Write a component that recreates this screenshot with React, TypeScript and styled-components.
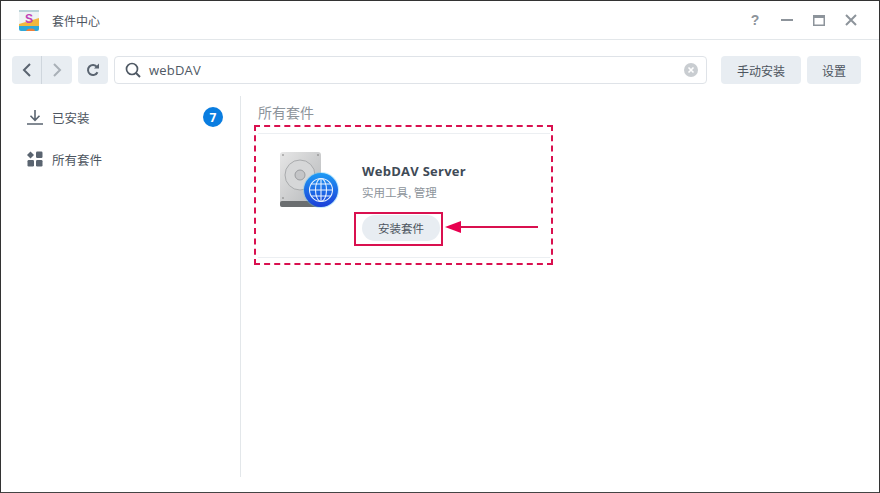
import React from 'react'
import styled, { createGlobalStyle } from 'styled-components'

const GlobalStyle = createGlobalStyle`
  html, body {
    margin: 0;
    padding: 0;
    background: #fff;
  }
  * {
    box-sizing: border-box;
  }
`

const Window = styled.div`
  width: 880px;
  height: 493px;
  display: flex;
  flex-direction: column;
  background: #fff;
  border: 1px solid #333;
  border-bottom-color: #444;
  font-family: 'Noto Sans CJK SC', 'Liberation Sans', sans-serif;
  color: #4a5663;
  overflow: hidden;
`

const TitleBar = styled.div`
  height: 39px;
  flex: none;
  display: flex;
  align-items: center;
  padding: 0 20px 0 17px;
  border-bottom: 1px solid #e3e7ea;
`

const AppTitle = styled.span`
  margin-left: 12px;
  font-size: 12px;
  color: #4d5560;
`

const WindowControls = styled.div`
  margin-left: auto;
  display: flex;
  align-items: center;
  gap: 16px;
  color: #8d949b;
`

const WindowButton = styled.button`
  width: 16px;
  height: 16px;
  padding: 0;
  border: none;
  background: none;
  color: inherit;
  display: flex;
  align-items: center;
  justify-content: center;
  font: 14px 'Liberation Sans', sans-serif;
`

const Toolbar = styled.div`
  height: 56px;
  flex: none;
  display: flex;
  align-items: center;
  padding: 4px 17px 0 11px;
`

const NavGroup = styled.div`
  display: flex;
  height: 28px;
  border-radius: 4px;
  overflow: hidden;
  margin-right: 6px;
`

const NavButton = styled.button<{ $muted?: boolean; $divider?: boolean }>`
  width: 30px;
  height: 28px;
  padding: 0;
  border: none;
  border-right: ${({ $divider }) => ($divider ? '1px solid #cfd6dd' : 'none')};
  background: #e8edf2;
  color: ${({ $muted }) => ($muted ? '#a9b0b7' : '#5a6470')};
  display: flex;
  align-items: center;
  justify-content: center;
`

const SearchBox = styled.div`
  width: 593px;
  height: 28px;
  display: flex;
  align-items: center;
  padding: 0 8px 0 10px;
  border: 1px solid #dfe3e8;
  border-radius: 4px;
  color: #4f5964;
`

const SearchText = styled.span`
  margin-left: 8px;
  font: 13px 'Open Sans', 'Liberation Sans', sans-serif;
  letter-spacing: 0.2px;
  flex: 1;
`

const ToolButton = styled.button<{ $width: number; $gap: number }>`
  width: ${({ $width }) => $width}px;
  height: 28px;
  margin-left: ${({ $gap }) => $gap}px;
  padding: 0;
  border: none;
  border-radius: 4px;
  background: #e8edf2;
  color: #4d5560;
  font: 12px 'Noto Sans CJK SC', sans-serif;
`

const Body = styled.div`
  flex: 1;
  display: flex;
  min-height: 0;
  padding-bottom: 15px;
`

const Sidebar = styled.nav`
  width: 240px;
  flex: none;
  border-right: 1px solid #e3e7ea;
  padding: 0 17px 0 26px;
`

const SideItem = styled.div`
  height: 42px;
  display: flex;
  align-items: center;
  font-size: 12.5px;
  color: #4d5560;
`

const SideIcon = styled.span`
  width: 16px;
  height: 16px;
  margin-right: 9px;
  display: flex;
  color: #5a6470;
`

const Badge = styled.span`
  margin-left: auto;
  width: 20px;
  height: 20px;
  border-radius: 50%;
  background: #0a7de0;
  color: #fff;
  display: flex;
  align-items: center;
  justify-content: center;
  font: bold 12px 'Open Sans', sans-serif;
`

const Main = styled.main`
  flex: 1;
  padding: 6px 0 0 17px;
`

const SectionTitle = styled.h2`
  margin: 0 0 10px;
  height: 21px;
  line-height: 21px;
  font-size: 14px;
  font-weight: 400;
  color: #8d949b;
`

const Card = styled.div`
  position: relative;
  width: 292px;
  height: 125px;
  display: flex;
  align-items: flex-start;
  padding: 17px 0 0 21px;
  border-top: 1px solid #eceff2;
  border-bottom: 1px solid #eceff2;
`

const CardInfo = styled.div`
  margin-left: 21px;
  padding-top: 11px;
  display: flex;
  flex-direction: column;
  align-items: flex-start;
`

const PackageName = styled.div`
  font: bold 13px/18px 'Open Sans', 'Liberation Sans', sans-serif;
  letter-spacing: 0.25px;
  color: #3f4b57;
`

const PackageTags = styled.div`
  margin-top: 3px;
  font-size: 11.5px;
  line-height: 18px;
  color: #8d949b;
`

const InstallButton = styled.button`
  margin-top: 14px;
  width: 78px;
  height: 26px;
  padding: 0;
  border: none;
  border-radius: 13px;
  background: #e8edf2;
  color: #4d5560;
  font: 11.5px 'Noto Sans CJK SC', sans-serif;
`

const DashedFrame = styled.div`
  position: absolute;
  left: -4px;
  top: -9px;
  width: 299px;
  height: 140px;
  border: 2px dashed #d9104f;
  pointer-events: none;
`

const ButtonFrame = styled.div`
  position: absolute;
  left: 96px;
  top: 78px;
  width: 89px;
  height: 34px;
  border: 2px solid #d9104f;
  pointer-events: none;
`

const ArrowMark = styled.svg`
  position: absolute;
  left: 187px;
  top: 86px;
`

function PackageIcon() {
  return (
    <svg width="62" height="62" viewBox="0 0 62 62">
      <defs>
        <linearGradient id="disk" x1="0" y1="0" x2="1" y2="1">
          <stop offset="0" stopColor="#e6e6e6" />
          <stop offset="1" stopColor="#b4b6b8" />
        </linearGradient>
        <linearGradient id="globe" x1="0" y1="0" x2="0" y2="1">
          <stop offset="0" stopColor="#1e9bf5" />
          <stop offset="1" stopColor="#1c3fd8" />
        </linearGradient>
      </defs>
      <rect x="1" y="1" width="41" height="55" rx="3" fill="url(#disk)" />
      <rect x="1" y="50" width="41" height="6" rx="2" fill="#6b6e70" />
      <circle cx="21" cy="24" r="15" fill="#d6d7d8" stroke="#a9abad" />
      <circle cx="21" cy="24" r="5" fill="#c4c5c7" stroke="#9a9c9f" />
      <circle cx="4" cy="4" r="0.8" fill="#777" />
      <circle cx="39" cy="4" r="0.8" fill="#777" />
      <circle cx="4" cy="47" r="0.8" fill="#777" />
      <circle cx="42" cy="39" r="18" fill="#4fc3f7" opacity="0.35" />
      <circle cx="42" cy="39" r="17" fill="url(#globe)" />
      <g fill="none" stroke="#e8f1ff" strokeWidth="1.1">
        <circle cx="42" cy="39" r="11.5" />
        <ellipse cx="42" cy="39" rx="5.5" ry="11.5" />
        <path d="M42 27.5v23M30.5 39h23M32.3 33h19.4M32.3 45h19.4" />
      </g>
    </svg>
  )
}

function StoreLogo() {
  return (
    <svg width="22" height="23" viewBox="0 0 22 23">
      <rect x="1" y="1" width="20" height="21" rx="2" fill="#eef3f4" />
      <path d="M1 15 L21 9 V17 H1Z" fill="#f3b73d" />
      <path d="M1 17h20v3a2 2 0 0 1-2 2H3a2 2 0 0 1-2-2z" fill="#2fa8d8" />
      <path d="M8 22c1-3 6-3 8-2l1 2z" fill="#ee7f3a" />
      <path d="M1 1h20v2H1z" fill="#b9d2d8" />
      <text x="11" y="14" textAnchor="middle" fontSize="12" fontWeight="700" fontFamily="'Liberation Sans', sans-serif" fill="#c13fb5">
        S
      </text>
    </svg>
  )
}

export default function App() {
  return (
    <>
      <GlobalStyle />
      <Window>
        <TitleBar>
          <StoreLogo />
          <AppTitle>套件中心</AppTitle>
          <WindowControls>
            <WindowButton style={{ fontWeight: 700 }}>?</WindowButton>
            <WindowButton>
              <svg width="12" height="2" viewBox="0 0 12 2">
                <rect width="12" height="2" fill="currentColor" />
              </svg>
            </WindowButton>
            <WindowButton>
              <svg width="12" height="11" viewBox="0 0 12 11">
                <path d="M0.75 0.75h10.5v9.5H0.75z" fill="none" stroke="currentColor" strokeWidth="1.5" />
                <rect width="12" height="3" fill="currentColor" />
              </svg>
            </WindowButton>
            <WindowButton>
              <svg width="12" height="12" viewBox="0 0 12 12">
                <path d="M1 1l10 10M11 1L1 11" stroke="currentColor" strokeWidth="2" />
              </svg>
            </WindowButton>
          </WindowControls>
        </TitleBar>
        <Toolbar>
          <NavGroup>
            <NavButton $divider>
              <svg width="10" height="14" viewBox="0 0 10 14">
                <path d="M8 1L2 7l6 6" fill="none" stroke="currentColor" strokeWidth="2" />
              </svg>
            </NavButton>
            <NavButton $muted>
              <svg width="10" height="14" viewBox="0 0 10 14">
                <path d="M2 1l6 6-6 6" fill="none" stroke="currentColor" strokeWidth="2" />
              </svg>
            </NavButton>
          </NavGroup>
          <NavGroup>
            <NavButton>
              <svg width="14" height="14" viewBox="0 0 14 14">
                <path d="M11.5 9.2A5 5 0 1 1 11 4" fill="none" stroke="currentColor" strokeWidth="2" />
                <path d="M8 5.5h5v-5z" fill="currentColor" />
              </svg>
            </NavButton>
          </NavGroup>
          <SearchBox>
            <svg width="16" height="16" viewBox="0 0 16 16">
              <circle cx="7" cy="7" r="5.5" fill="none" stroke="currentColor" strokeWidth="1.7" />
              <path d="M11 11l4 4" stroke="currentColor" strokeWidth="2" />
            </svg>
            <SearchText>webDAV</SearchText>
            <svg width="14" height="14" viewBox="0 0 14 14">
              <circle cx="7" cy="7" r="7" fill="#c9cdd1" />
              <path d="M4.5 4.5l5 5M9.5 4.5l-5 5" stroke="#fff" strokeWidth="1.6" />
            </svg>
          </SearchBox>
          <ToolButton $width={80} $gap={14}>手动安装</ToolButton>
          <ToolButton $width={54} $gap={6}>设置</ToolButton>
        </Toolbar>
        <Body>
          <Sidebar>
            <SideItem>
              <SideIcon>
                <svg width="16" height="16" viewBox="0 0 16 16">
                  <path d="M8 1v10M3.5 6.8L8 11.3l4.5-4.5M0 15h16" fill="none" stroke="currentColor" strokeWidth="1.6" />
                </svg>
              </SideIcon>
              已安装
              <Badge>7</Badge>
            </SideItem>
            <SideItem>
              <SideIcon>
                <svg width="16" height="16" viewBox="0 0 16 16" fill="currentColor">
                  <path d="M3.5 0.5L7 4 3.5 7.5 0 4z" />
                  <rect x="9" y="0.5" width="6.5" height="6.5" rx="1.2" />
                  <rect x="0.5" y="9" width="6.5" height="6.5" rx="1.2" />
                  <rect x="9" y="9" width="6.5" height="6.5" rx="1.2" />
                </svg>
              </SideIcon>
              所有套件
            </SideItem>
          </Sidebar>
          <Main>
            <SectionTitle>所有套件</SectionTitle>
            <Card>
              <PackageIcon />
              <CardInfo>
                <PackageName>WebDAV Server</PackageName>
                <PackageTags>实用工具, 管理</PackageTags>
                <InstallButton>安装套件</InstallButton>
              </CardInfo>
              <DashedFrame />
              <ButtonFrame />
              <ArrowMark width="93" height="14" viewBox="0 0 93 14">
                <path d="M0 7L16 1v12z" fill="#e8004f" />
                <rect x="14" y="6" width="79" height="2" fill="#d9104f" />
              </ArrowMark>
            </Card>
          </Main>
        </Body>
      </Window>
    </>
  )
}
